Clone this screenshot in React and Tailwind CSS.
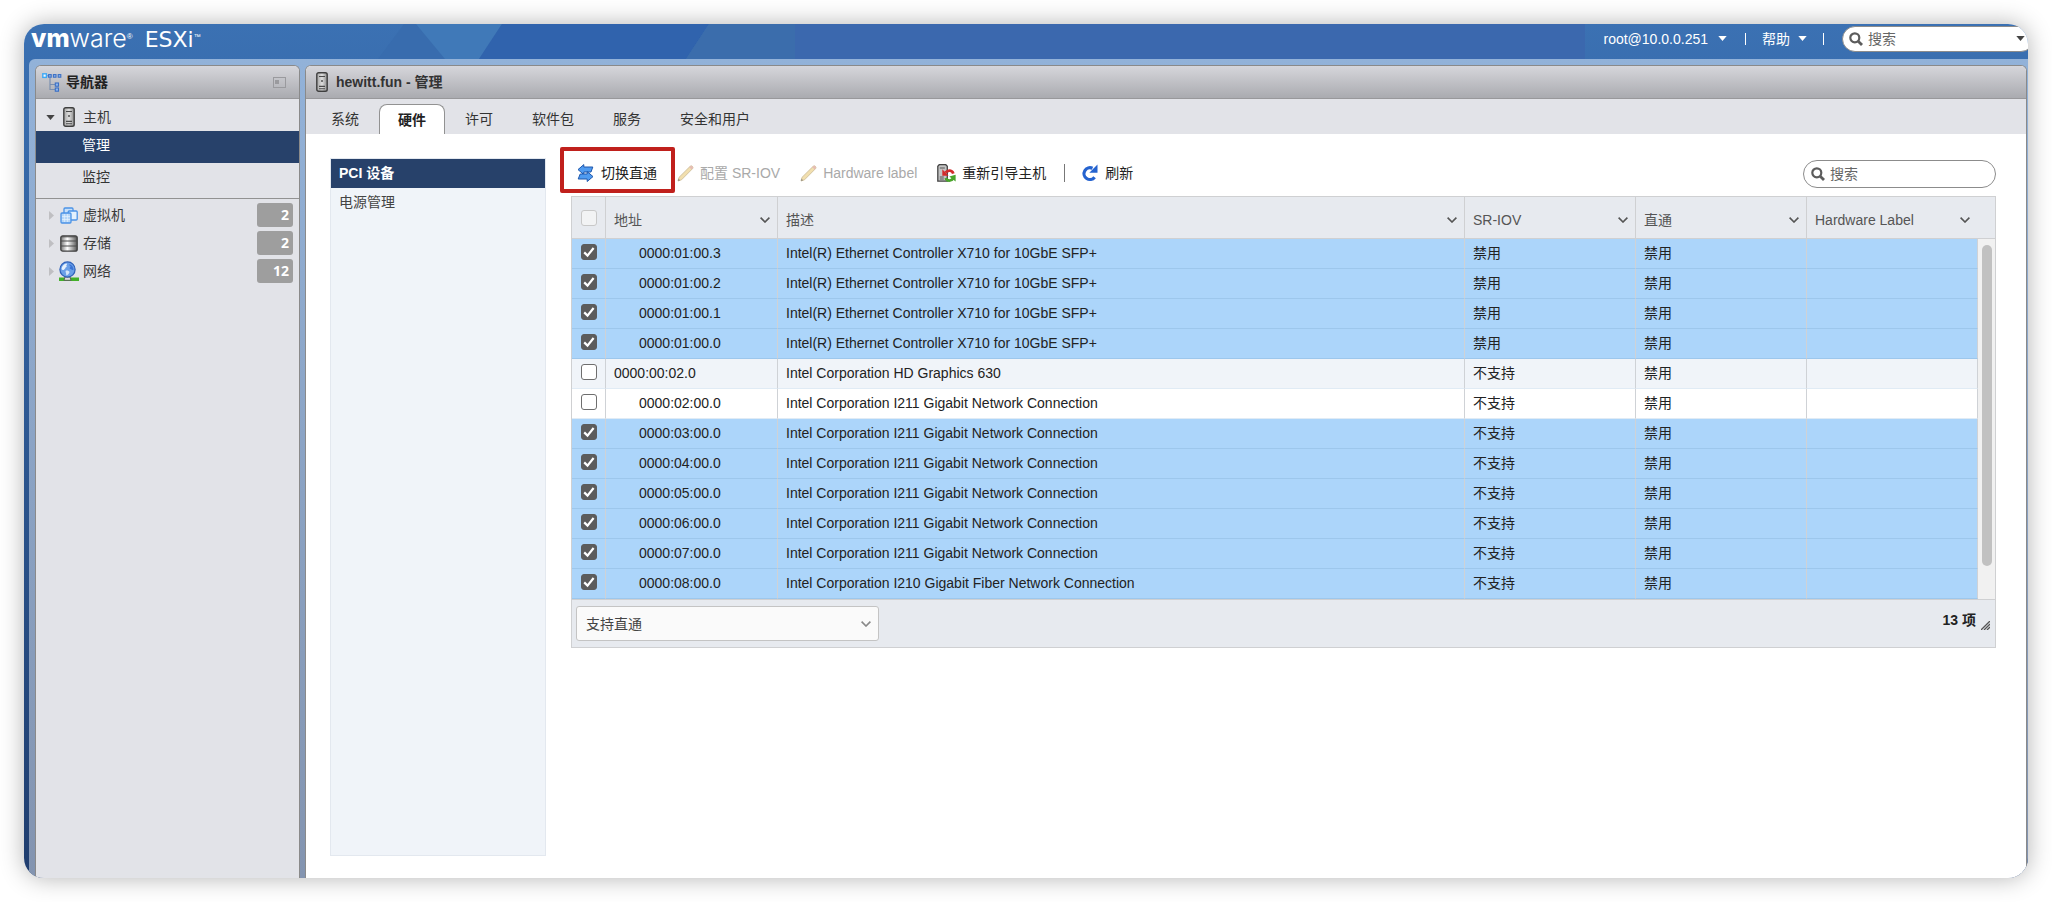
import React, { useState } from 'react';

const X710 = 'Intel(R) Ethernet Controller X710 for 10GbE SFP+';
const I211 = 'Intel Corporation I211 Gigabit Network Connection';

const initialDevices = [
  { address: '0000:01:00.3', name: X710, sriov: '禁用', child: true, checked: true },
  { address: '0000:01:00.2', name: X710, sriov: '禁用', child: true, checked: true },
  { address: '0000:01:00.1', name: X710, sriov: '禁用', child: true, checked: true },
  { address: '0000:01:00.0', name: X710, sriov: '禁用', child: true, checked: true },
  { address: '0000:00:02.0', name: 'Intel Corporation HD Graphics 630', sriov: '不支持', child: false, checked: false },
  { address: '0000:02:00.0', name: I211, sriov: '不支持', child: true, checked: false },
  { address: '0000:03:00.0', name: I211, sriov: '不支持', child: true, checked: true },
  { address: '0000:04:00.0', name: I211, sriov: '不支持', child: true, checked: true },
  { address: '0000:05:00.0', name: I211, sriov: '不支持', child: true, checked: true },
  { address: '0000:06:00.0', name: I211, sriov: '不支持', child: true, checked: true },
  { address: '0000:07:00.0', name: I211, sriov: '不支持', child: true, checked: true },
  { address: '0000:08:00.0', name: 'Intel Corporation I210 Gigabit Fiber Network Connection', sriov: '不支持', child: true, checked: true },
];

const tabs = ['系统', '硬件', '许可', '软件包', '服务', '安全和用户'];

// Icons
const Caret = ({ className }) => (
  <svg viewBox="0 0 10 6" className={`h-[5px] w-[9px] ${className}`} fill="currentColor" aria-hidden="true">
    <path d="M0 0h10L5 6z" />
  </svg>
);

const Chevron = ({ className }) => (
  <svg viewBox="0 0 10 6" className={`h-[6px] w-[10px] ${className}`} fill="none" stroke="currentColor" strokeWidth="1.6" aria-hidden="true">
    <path d="M0.6 0.6 5 5 9.4 0.6" />
  </svg>
);

const SearchIcon = () => (
  <svg viewBox="0 0 14 14" className="h-[14px] w-[14px] shrink-0 text-[#5c5c5c]" fill="none" stroke="currentColor" aria-hidden="true">
    <circle cx="5.8" cy="5.8" r="4.5" strokeWidth="2.2" />
    <path d="M9.2 9.2 13 13" strokeWidth="2.8" />
  </svg>
);

const HostIcon = () => (
  <svg viewBox="0 0 12 20" className="h-5 w-3 shrink-0" aria-hidden="true">
    <defs>
      <linearGradient id="host" x1="0" x2="1">
        <stop offset="0" stopColor="#a4a4a4" />
        <stop offset="0.5" stopColor="#dedede" />
        <stop offset="1" stopColor="#8c8c8c" />
      </linearGradient>
    </defs>
    <rect x="0.8" y="0.8" width="10.4" height="18.4" rx="1.8" fill="url(#host)" stroke="#3f3f3f" strokeWidth="1.4" />
    <path d="M3 4.5h6M3 14.4h6M3 16.8h6" stroke="#4a4a4a" strokeWidth="1.1" />
    <path d="M5.2 8.2h1.6v1.6H5.2z" fill="#333" />
  </svg>
);

const NavigatorIcon = () => (
  <svg viewBox="0 0 20 19" className="h-[19px] w-5 shrink-0" fill="none" aria-hidden="true">
    <path d="M8 5v11.5h5M8 11.5h5" stroke="#7a8fb0" strokeWidth="1.2" />
    <rect x="0.8" y="0.8" width="3.6" height="3.6" fill="#eef8ff" stroke="#3fa9f5" strokeWidth="1.4" />
    <path d="M5 2.8h2" stroke="#5a8fe0" />
    <g fill="#8fb6ee" stroke="#3b6fc4" strokeWidth="1.1">
      <rect x="6.6" y="1.6" width="2.6" height="2.6" />
      <rect x="11.4" y="1.6" width="2.6" height="2.6" />
      <rect x="16.2" y="1.6" width="2.6" height="2.6" />
      <rect x="13.3" y="10" width="3.2" height="3.2" />
      <rect x="13.3" y="15" width="3.2" height="3.2" />
    </g>
  </svg>
);

const VmIcon = () => (
  <svg viewBox="0 0 18 17" className="h-[17px] w-[18px] shrink-0" aria-hidden="true">
    <g stroke="#4b93e6" strokeWidth="1.3">
      <rect x="4" y="1" width="9" height="8.5" rx="1" fill="#c7e0fa" />
      <rect x="8.2" y="4" width="9" height="9" rx="1" fill="#e3f1fd" />
      <rect x="1" y="6" width="10" height="10" rx="1" fill="#b5d6f8" />
    </g>
    <path d="M2 9.5h8M2 12.5h8M4.4 7v8M7.6 7v8" stroke="#e5f2fe" strokeWidth="0.7" />
  </svg>
);

const StorageIcon = () => (
  <svg viewBox="0 0 18 17" className="h-[17px] w-[18px] shrink-0" aria-hidden="true">
    <defs>
      <linearGradient id="disk" x1="0" x2="1">
        <stop offset="0" stopColor="#777" />
        <stop offset="0.4" stopColor="#fff" />
        <stop offset="1" stopColor="#555" />
      </linearGradient>
    </defs>
    <rect x="0.8" y="0.8" width="16.4" height="15.4" rx="2" fill="url(#disk)" stroke="#404040" strokeWidth="1.3" />
    <path d="M1 1.8h16M1 6h16M1 11h16" stroke="#4a4a4a" strokeWidth="1" />
  </svg>
);

const NetworkIcon = () => (
  <svg viewBox="0 0 20 20" className="h-5 w-5 shrink-0" aria-hidden="true">
    <path d="M0 16.5h20V20H0z" fill="#43b02a" />
    <path d="M5 19.3 6 16h5l1 3.3z" fill="#ddd" stroke="#555" strokeWidth="0.9" />
    <circle cx="8.5" cy="8.5" r="7.6" fill="#6a9fe8" stroke="#2c5fb8" strokeWidth="1.2" />
    <path d="M2.5 8C3 5 5 3 7.500 2.600c1 .2.600 1.200-.3 1.900 1.200.5.300 1.700-.8 2.100.3 1-.6 1.200-1.200 1.800-.8.900-1.900.9-2.700-.4z" fill="#e6f1fc" />
    <path d="M10.500 3.200c2.400.8 4 2.900 4 5.500-.9.800-1.900.2-2.500-.7-.8 0-1.600-.4-1.300-1.300.9-.6 1.200-1.300.3-1.900-.8-.4-.9-1-.5-1.600z" fill="#3a73d4" />
    <path d="M7 9.500c1.500-.3 3.200.3 3.600 1.600-.4 1.400-1.500 2.700-2.800 3.300-.9-.6-.6-1.600-.8-2.500-.5-.9-.6-1.700 0-2.400z" fill="#d3e5f9" />
  </svg>
);

const SwapIcon = () => (
  <svg viewBox="0 0 17 18" className="h-[18px] w-[17px] shrink-0" aria-hidden="true">
    <g fill="#4f9bf0" stroke="#1f57ab" strokeWidth="1" strokeLinejoin="round">
      <path d="M1 5.6 6.800 0.600v2.400h9l-1.800 5h-7.200v2.600z" />
      <path d="M16 12.600 10.200 7.600v2.400H3.200L1.200 15h9v2.500z" />
    </g>
  </svg>
);

const PencilIcon = () => (
  <svg viewBox="0 0 17 17" className="h-[17px] w-[17px] shrink-0" aria-hidden="true">
    <path d="M1 16l1-3.6L13.2 1.3q1.2-.9 2.200.1t.2 2.200L4.500 14.800z" fill="#f2dfae" stroke="#cdbd98" strokeWidth="0.9" />
    <path d="M12.300 2.200 13.200 1.300q1.200-.9 2.200.1t.2 2.200l-.9.900z" fill="#e6bdb4" />
    <path d="M1 16l.6-2.200 1.500 1.500z" fill="#8f8a80" />
  </svg>
);

const RebootIcon = () => (
  <svg viewBox="0 0 19 19" className="h-[19px] w-[19px] shrink-0" fill="none" aria-hidden="true">
    <path d="M2.200.700h6.600l1.500 1.500v15H.800V2.200z" fill="#c4c4c4" stroke="#444" strokeWidth="1.300" />
    <path d="M2.800 4h5M2.800 13h4M2.800 15h4" stroke="#555" strokeWidth="1" />
    <path d="M8.500 8.600C11 5.600 15.200 6 16.300 9.600" stroke="#d22b2b" strokeWidth="2.800" />
    <path d="M5.300 5.200v6.600h6.300z" fill="#d22b2b" />
    <path d="M16.200 14.400c-2 3-6.200 3-7.500-.3" stroke="#4aa52c" strokeWidth="2.800" />
    <path d="M18.600 10.800v6.700l-6.300-5z" fill="#4aa52c" />
  </svg>
);

const RefreshIcon = () => (
  <svg viewBox="0 0 17 18" className="h-[18px] w-[17px] shrink-0" fill="none" aria-hidden="true">
    <path d="M11.5 4.3A5.9 5.9 0 1 0 13.6 13.2" stroke="#2563cf" strokeWidth="3.2" />
    <path d="M16.5 0.5v8.3H8.3z" fill="#2563cf" />
  </svg>
);

const NavItem = ({ icon, label, count }) => (
  <li className="flex h-7 items-center pl-[13px] pr-[6px]">
    <svg viewBox="0 0 5 9" className="h-[9px] w-[5px] shrink-0" fill="#bfbfc2" aria-hidden="true">
      <path d="M0 0v9l5-4.5z" />
    </svg>
    <span className="flex w-[29px] justify-end">
      {icon}
    </span>
    <a href="#" className="flex-1 text-[#3a3a3a]">{label}</a>
    <span className="h-6 w-9 rounded-[3px] bg-[#9e9e9e] pr-1 text-right font-['Open_Sans'] leading-6 font-bold text-white">
      {count}
    </span>
  </li>
);

const Checkbox = ({ checked, onChange, label, muted }) => (
  <span className="relative mx-auto block h-4 w-4">
    <input
      type="checkbox"
      checked={checked}
      onChange={onChange}
      aria-label={label}
      className={`block h-4 w-4 appearance-none rounded-[3px] border ${
        muted ? 'border-[#c8c8c8] bg-[#f2f3f4]' : 'border-[#6e6e6e] bg-white checked:border-[#5c5c5c] checked:bg-[#5c5c5c]'
      }`}
    />
    {checked && (
      <svg viewBox="0 0 16 16" className="pointer-events-none absolute inset-0" fill="none" stroke="#fff" strokeWidth="2.2" aria-hidden="true">
        <path d="M3.2 8.4 6.5 11.6 12.6 4" />
      </svg>
    )}
  </span>
);

const HeaderCell = ({ label }) => (
  <th className="border-r border-b border-[#cfd0d2] pr-[7px] pl-2 text-left font-normal">
    <span className="flex items-center justify-between pt-[5px]">
      {label}
      <Chevron className="text-[#555]" />
    </span>
  </th>
);

const TopBar = () => (
  <header className="relative flex h-[35px] shrink-0 items-start justify-between text-white">
    {/* Faceted background */}
    <svg className="absolute top-0 left-0 h-[35px] w-[1600px]" viewBox="0 0 1600 35" preserveAspectRatio="none" aria-hidden="true">
      <path d="M380 0h99l-25 35H354z" fill="#386cae" />
      <path d="M392 0h86l-23 35h-34z" fill="#4079b8" />
      <path d="M478 0h207l-23 35H455z" fill="#3063ad" />
      <path d="M685 0h86v35H662z" fill="#3b6dac" />
      <path d="M771 0h790v35H771z" fill="#3b68ae" />
    </svg>
    <div className="relative flex items-baseline pl-[7px] leading-[28px]">
      <span className="font-['Inter'] text-[25px] font-extrabold">vm</span>
      <span className="font-['Inter'] text-[25px] font-light">ware</span>
      <sup className="relative top-[-8px] text-[8px] leading-none">®</sup>
      <span className="ml-3 font-['DejaVu_Sans'] text-[22px]">ESXi</span>
      <sup className="relative top-[-8px] text-[7px] leading-none">™</sup>
    </div>
    <div className="relative flex h-[29px] items-center">
      <button className="flex items-center gap-[10px]">
        root@10.0.0.251
        <Caret />
      </button>
      <span className="ml-[18px] h-3 w-px bg-white" />
      <button className="ml-4 flex items-center gap-2">
        帮助
        <Caret />
      </button>
      <span className="mr-[18px] ml-4 h-3 w-px bg-white" />
      <label className="mr-[-6px] flex h-[26px] w-48 items-center gap-[5px] rounded-full border border-[#8c8c8c] bg-white pr-2 pl-[6px] text-[#555]">
        <SearchIcon />
        <input type="text" placeholder="搜索" aria-label="搜索" className="min-w-0 flex-1 outline-none placeholder:text-[#666]" />
        <Caret className="text-[#444]" />
      </label>
    </div>
  </header>
);

const Navigator = () => (
  <nav className="flex w-[265px] shrink-0 flex-col rounded-t-md border border-b-0 border-[#8a8a8a] bg-[#e2e3e8]">
    <div className="flex h-[33px] items-center rounded-t-[5px] border-b border-[#98989b] bg-linear-to-b from-[#d6d6db] to-[#aaabb0] pr-[13px] pl-[6px]">
      <NavigatorIcon />
      <h2 className="ml-1 flex-1 font-bold text-[#222]">导航器</h2>
      <button aria-label="折叠" className="h-[11px] w-[13px] border border-[#9a9a9e] p-px">
        <span className="block h-1 w-1 bg-[#9a9a9e]" />
      </button>
    </div>
    <div className="flex h-8 items-center pt-1 pl-[10px]">
      <Caret className="text-[#444]" />
      <span className="mx-2">
        <HostIcon />
      </span>
      <a href="#" className="text-[#3a3a3a]">主机</a>
    </div>
    <a href="#" className="h-8 bg-[#27416a] pl-[46px] leading-[29px] text-white">管理</a>
    <a href="#" className="h-9 border-b border-[#929292] pl-[46px] leading-[29px] text-[#333]">监控</a>
    <ul className="pt-[2px]">
      <NavItem icon={<span className="mr-[5px]"><VmIcon /></span>} label="虚拟机" count={2} />
      <NavItem icon={<span className="mr-[5px]"><StorageIcon /></span>} label="存储" count={2} />
      <NavItem icon={<span className="mr-1"><NetworkIcon /></span>} label="网络" count={12} />
    </ul>
  </nav>
);

const DeviceTable = () => {
  const [devices, setDevices] = useState(initialDevices);

  const toggle = (address) => {
    setDevices(devices.map((d) => (d.address === address ? { ...d, checked: !d.checked } : d)));
  };

  return (
    <div className="border border-[#cfd0d2]">
      <table className="w-full table-fixed border-separate border-spacing-0">
        <colgroup>
          <col className="w-[34px]" />
          <col className="w-[172px]" />
          <col />
          <col className="w-[171px]" />
          <col className="w-[171px]" />
          <col className="w-[171px]" />
          <col className="w-[17px]" />
        </colgroup>
        <thead className="bg-[#e7eaef] text-[#555]">
          <tr className="h-[42px]">
            <th className="border-r border-b border-[#cfd0d2]">
              <Checkbox checked={false} onChange={() => {}} label="全选" muted />
            </th>
            <HeaderCell label="地址" />
            <HeaderCell label="描述" />
            <HeaderCell label="SR-IOV" />
            <HeaderCell label="直通" />
            <th className="border-b border-[#cfd0d2] px-2 text-left font-normal">
              <span className="flex items-center justify-between pt-[5px]">
                Hardware Label
                <Chevron className="text-[#555]" />
              </span>
            </th>
            <th className="border-b border-[#cfd0d2]" aria-label="滚动" />
          </tr>
        </thead>
        <tbody className="text-[#222]">
          {devices.map((d, i) => {
            const line = d.checked ? 'border-b border-b-[#9dc7ec]' : 'border-b border-b-[#e0ebf5]';
            const ruled = `${line} border-r border-r-[#cfd2d6] px-2 pb-[2px]`;
            return (
              <tr key={d.address} className={`h-[30px] ${d.checked ? 'bg-[#acd5fa]' : i % 2 ? 'bg-white' : 'bg-[#f0f4f9]'}`}>
                <td className={`${line} border-r border-r-[#cfd2d6] pb-1`}>
                  <Checkbox checked={d.checked} onChange={() => toggle(d.address)} label={d.address} />
                </td>
                <td className={ruled}>
                  <span className={d.child ? 'pl-[25px]' : ''}>{d.address}</span>
                </td>
                <td className={ruled}>{d.name}</td>
                <td className={ruled}>{d.sriov}</td>
                <td className={ruled}>禁用</td>
                <td className={ruled} />
                {i === 0 && (
                  <td rowSpan={devices.length} className="bg-[#f1f1f1] pt-[6px] align-top">
                    <span className="mx-auto block h-[321px] w-[10px] rounded-full bg-[#c1c1c1]" />
                  </td>
                )}
              </tr>
            );
          })}
        </tbody>
      </table>

      <div className="flex h-[48px] items-start justify-between border-t border-[#cfd0d2] bg-[#e7eaef] pt-[6px] pr-[5px] pl-1">
        <div className="relative">
          <select aria-label="筛选" className="h-[35px] w-[303px] appearance-none rounded-[3px] border border-[#c4c4c4] bg-[#fafafa] px-[9px] text-[#444]">
            <option>支持直通</option>
          </select>
          <Chevron className="pointer-events-none absolute top-[15px] right-2 text-[#888]" />
        </div>
        <div className="flex items-end gap-[5px]">
          <span className="pt-1 font-bold text-[#222]">13 项</span>
          <svg viewBox="0 0 9 9" className="h-[9px] w-[9px]" stroke="#555" strokeWidth="1.3" aria-hidden="true">
            <path d="M0 9 9 0M3 9 9 3M6 9 9 6" />
          </svg>
        </div>
      </div>
    </div>
  );
};

const Toolbar = () => (
  <div className="flex h-[38px] items-start justify-between">
    <div className="flex h-[30px] items-center pl-[6px] text-[#222]">
      <button className="relative flex h-full items-center gap-[7px]">
        <SwapIcon />
        切换直通
        {/* Highlight frame */}
        <span className="pointer-events-none absolute -top-[11px] -right-[18px] -bottom-[5px] -left-[17px] rounded-[2px] border-4 border-[#c0201c]" />
      </button>
      <button disabled className="ml-5 flex items-center gap-[6px] text-[#a9a9a9]">
        <PencilIcon />
        配置 SR-IOV
      </button>
      <button disabled className="ml-5 flex items-center gap-[6px] text-[#a9a9a9]">
        <PencilIcon />
        Hardware label
      </button>
      <button className="ml-5 flex items-center gap-[6px]">
        <RebootIcon />
        重新引导主机
      </button>
      <span className="ml-[18px] h-[18px] w-px bg-[#777]" />
      <button className="ml-4 flex items-center gap-[7px]">
        <RefreshIcon />
        刷新
      </button>
    </div>
    <label className="mt-[2px] flex h-7 w-[193px] items-center gap-[5px] rounded-full border border-[#8c8c8c] bg-white px-[7px] text-[#555]">
      <SearchIcon />
      <input type="text" placeholder="搜索" aria-label="搜索设备" className="min-w-0 flex-1 outline-none placeholder:text-[#666]" />
    </label>
  </div>
);

const MainPanel = () => {
  const [active, setActive] = useState('硬件');

  return (
    <main className="flex min-w-0 flex-1 flex-col rounded-t-md border border-b-0 border-[#8a8a8a] bg-white">
      <div className="flex h-[33px] items-center rounded-t-[5px] border-b border-[#98989b] bg-linear-to-b from-[#d6d6db] to-[#aaabb0] pl-[10px]">
        <HostIcon />
        <h1 className="ml-2 font-bold text-[#333]">hewitt.fun - 管理</h1>
      </div>
      <div className="flex h-[35px] items-end gap-px bg-[#e2e3e8] pl-[6px]">
        {tabs.map((tab) => (
          <button
            key={tab}
            onClick={() => setActive(tab)}
            className={`h-[30px] px-[18px] ${
              active === tab
                ? 'rounded-t-lg border border-b-0 border-[#929292] bg-white font-bold text-[#222]'
                : 'border border-transparent text-[#333]'
            }`}
          >
            {tab}
          </button>
        ))}
      </div>
      <div className="flex flex-1 gap-[25px] pt-[24px] pr-[30px] pb-[22px] pl-6">
        <aside className="flex w-[216px] shrink-0 flex-col border border-[#e3e8ef] bg-[#f0f4f9]">
          <a href="#" className="bg-[#27416a] pl-2 leading-[29px] font-bold text-white">PCI 设备</a>
          <a href="#" className="pl-2 leading-[29px] text-[#444]">电源管理</a>
        </aside>
        <section className="min-w-0 flex-1">
          <Toolbar />
          <DeviceTable />
        </section>
      </div>
    </main>
  );
};

const App = () => (
  <div className="flex min-h-screen bg-white p-6 font-['Liberation_Sans','Noto_Sans_CJK_SC',sans-serif] text-sm leading-5">
    <div className="flex min-w-0 flex-1 flex-col overflow-hidden rounded-[20px] bg-linear-to-b from-[#3b71b3] to-[#1f3d6e] shadow-[0_0_24px_rgba(0,0,0,0.3)]">
      <TopBar />
      <div className="ml-[5px] flex flex-1 gap-[5px] rounded-tl-md bg-linear-to-b from-[#92b2d9] to-[#8394b0] pt-[6px] pr-[1px] pl-[6px]">
        <Navigator />
        <MainPanel />
      </div>
    </div>
  </div>
);

export default App;
